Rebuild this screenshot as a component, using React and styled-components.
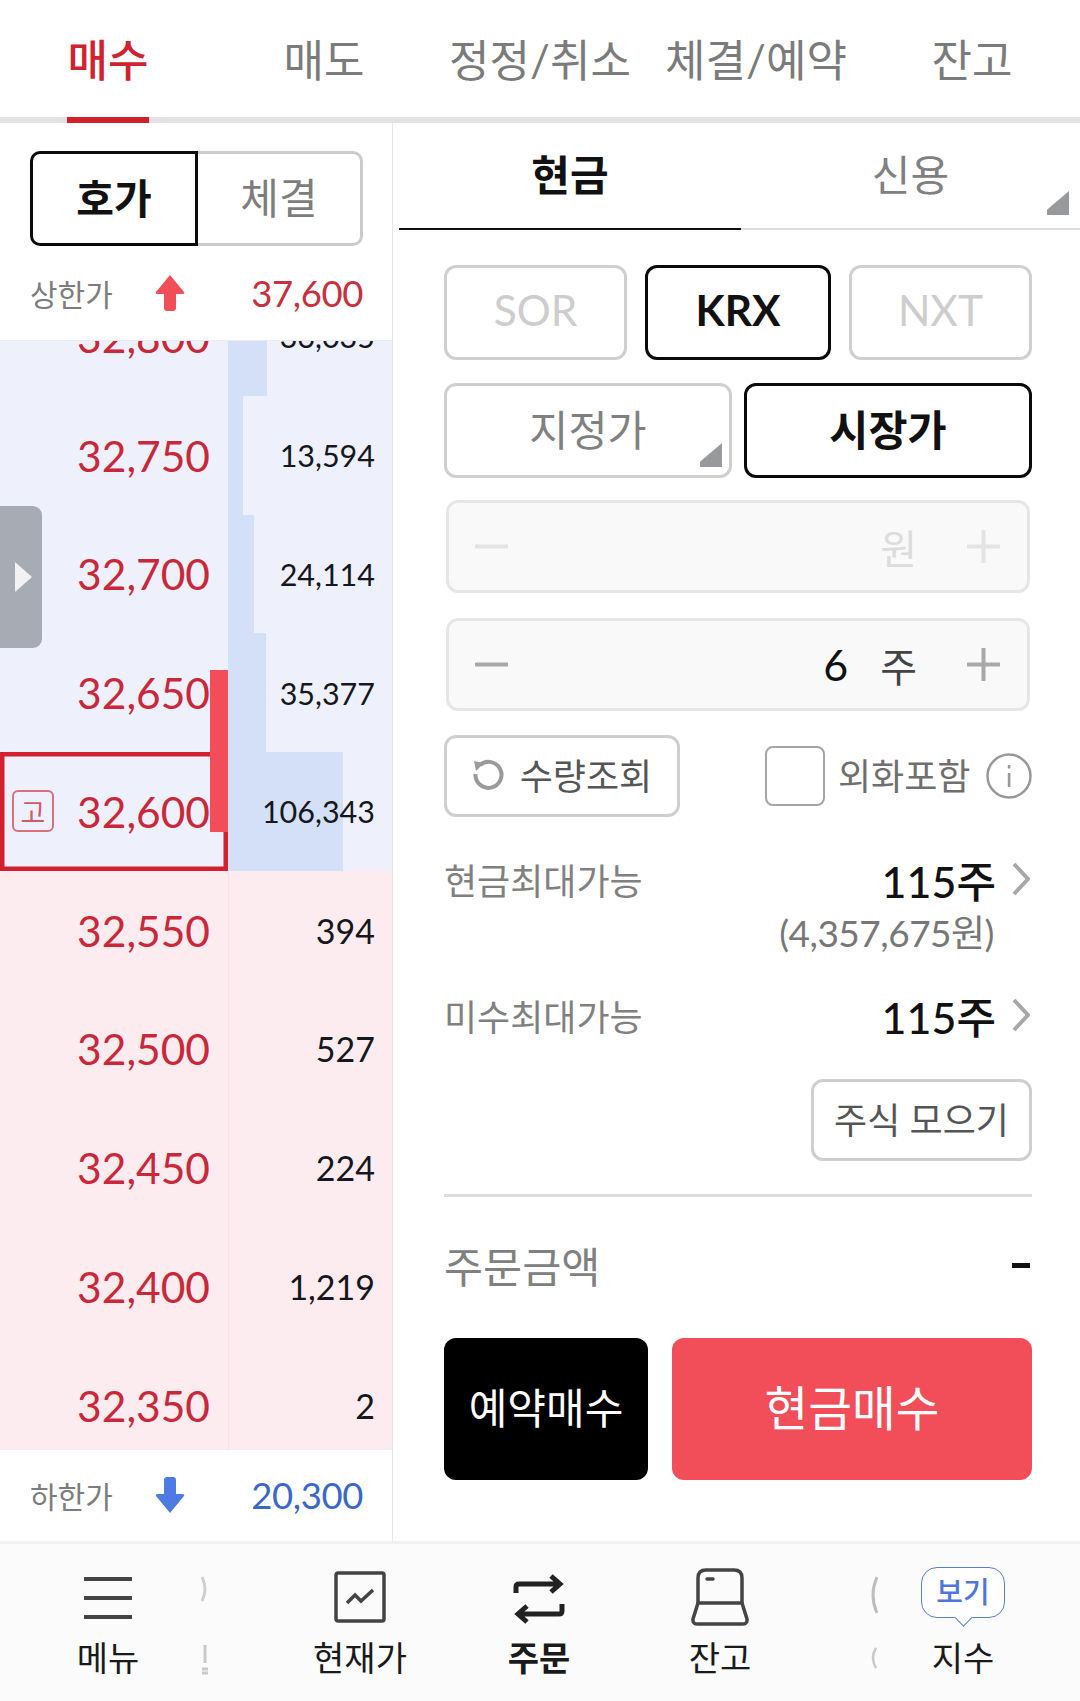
import React from "react";
import styled, { createGlobalStyle } from "styled-components";

const Global = createGlobalStyle`
  html, body { margin: 0; padding: 0; background: #fff; }
  * { box-sizing: border-box; }
  body { font-family: Lato, "Noto Sans CJK KR", sans-serif; }
`;

const Page = styled.div`
  width: 1080px; height: 1701px; display: flex; flex-direction: column; overflow: hidden; background: #fff;
`;
const TopTabs = styled.div`
  display: flex; height: 123px; flex: none; border-bottom: 6px solid #e2e2e4;
`;
const TopTab = styled.div`
  position: relative; width: 216px; height: 117px; display: flex; align-items: center; justify-content: center; padding-bottom: 2px;
  font-size: 44px; font-weight: ${p => (p.$on ? 500 : 400)}; color: ${p => (p.$on ? "#cf2331" : "#7b7b7b")};
  white-space: nowrap;
  &::after {
    content: ""; display: ${p => (p.$on ? "block" : "none")}; position: absolute; left: 67px; width: 82px; bottom: -6px; height: 6px; background: #d3202e;
  }
`;
const Main = styled.div`
  flex: 1; display: flex; min-height: 0; padding-top: 4px;
`;
const Left = styled.div`
  width: 393px; flex: none; display: flex; flex-direction: column; border-right: 1px solid #e6e6ea; margin-top: -4px;
`;
const LeftHead = styled.div`
  height: 217px; flex: none; padding: 28px 29px 0 30px;
`;
const Toggle = styled.div`
  display: flex; height: 95px; width: 333px;
`;
const ToggleOn = styled.div`
  width: 168px; border: 3.5px solid #0a0a0a; border-radius: 10px 0 0 10px; display: flex; align-items: center; justify-content: center; padding-bottom: 6px;
  font-size: 41px; font-weight: 700; color: #111;
`;
const ToggleOff = styled.div`
  width: 165px; border: 3px solid #cbcbcb; border-left: none; border-radius: 0 10px 10px 0; display: flex; align-items: center; justify-content: center; padding-bottom: 6px;
  font-size: 42px; color: #7d7d7d;
`;
const LimitRow = styled.div`
  display: grid; grid-template-columns: 125px 30px 1fr; align-items: center; height: ${p => p.$h}px;
`;
const LimitLabel = styled.span`
  font-size: 30px; color: #7c7c7c; white-space: nowrap;
`;
const LimitValue = styled.span`
  font-size: 36.5px; text-align: right; color: ${p => p.$c}; letter-spacing: -0.4px;
`;
const Book = styled.div`
  position: relative; height: 1110px; flex: none; overflow: hidden; border-top: 1px solid #ececf0;
`;
const BookInner = styled.div`
  margin-top: -64px;
`;
const BookRow = styled.div`
  display: flex; height: 118.75px; background: ${p => (p.$ask ? "#eef1fc" : "#fdecef")};
`;
const PriceCell = styled.div`
  width: 228px; flex: none; display: flex; align-items: center; justify-content: flex-end; padding-right: 18px; position: relative;
  font-size: 42.5px; color: #c9283a; box-shadow: ${p => (p.$cur ? "inset 0 0 0 4.5px #d3202e" : "none")};
`;
const VolumeCell = styled.div`
  flex: 1; display: flex; align-items: center; justify-content: flex-end; padding-right: 17px;
  font-size: ${p => p.$fs}px; color: #15171c;
  background: ${p => `linear-gradient(to right, #d3e0f8 ${p.$bar}px, transparent ${p.$bar}px)`};
  border-left: ${p => (p.$ask ? "none" : "1px solid #f9e3e6")};
`;
const StrengthBar = styled.div`
  position: absolute; left: 210px; top: 329px; width: 18px; height: 162px; background: #f24e5a;
`;
const SideHandle = styled.div`
  position: absolute; left: 0; top: 165px; width: 42px; height: 142px; background: #a7acb4; border-radius: 0 9px 9px 0;
  display: flex; align-items: center; padding-left: 15px;
  &::before {
    content: ""; border-left: 17px solid #f1f2f3; border-top: 15px solid transparent; border-bottom: 15px solid transparent;
  }
`;
const CurBadge = styled.span`
  position: absolute; left: 12px; top: 38px; width: 42px; height: 42px; border: 2.5px solid #d9707c; border-radius: 6px;
  display: flex; align-items: center; justify-content: center; font-size: 27px; color: #cf5c69;
`;
const LeftFoot = styled.div`
  flex: 1; padding: 0 29px 0 30px; background: #fff;
`;
const Right = styled.div`
  flex: 1; display: flex; flex-direction: column; min-width: 0;
`;
const SubTabs = styled.div`
  position: relative; display: flex; height: 103px; margin-left: 6px; flex: none;
`;
const SubTab = styled.div`
  width: ${p => p.$w}px; display: flex; align-items: center; justify-content: center; padding-bottom: 10px;
  font-size: 42px; font-weight: ${p => (p.$on ? 700 : 400)}; color: ${p => (p.$on ? "#111" : "#808080")};
  border-bottom: 2px solid ${p => (p.$on ? "#111" : "#dddddd")};
`;
const CornerMark = styled.span`
  position: absolute; right: ${p => p.$r}px; bottom: ${p => p.$b}px; width: 22px; height: 24px; background: #97999d;
  clip-path: polygon(100% 0, 100% 100%, 0 100%, 0 78%);
`;
const Form = styled.div`
  display: flex; flex-direction: column; padding: 35px 48px 0 51px;
`;
const BtnRow = styled.div`
  display: flex; justify-content: space-between; margin-top: ${p => p.$mt || 0}px;
`;
const Choice = styled.div`
  position: relative; width: ${p => p.$w}px; height: 95px; border-radius: 12px; display: flex; align-items: center; justify-content: center; padding-bottom: 7px;
  border: 3px solid ${p => (p.$on ? "#0a0a0a" : "#cfcfcf")};
  font-size: 42.5px; font-weight: ${p => (p.$on ? 700 : 400)};
  color: ${p => (p.$on ? "#111" : p.$dim ? "#cdcdcd" : "#808080")};
`;
const Stepper = styled.div`
  height: 93px; margin: ${p => p.$mt}px 2px 0; background: #f9f9f9; border: 3px solid #e6e6e6; border-radius: 12px;
  display: flex; align-items: center; padding: 0 27px 0 26px;
`;
const StepValue = styled.span`
  margin-left: auto; font-size: 43px; color: #111; margin-right: 32px;
`;
const StepUnit = styled.span`
  margin-left: ${p => (p.$auto ? "auto" : "0")}; font-size: 40px; margin-right: 50px; color: ${p => (p.$off ? "#dcdcdc" : "#444")};
`;
const OptionRow = styled.div`
  display: flex; align-items: center; margin-top: 24px; height: 82px;
`;
const SmallBtn = styled.div`
  width: ${p => p.$w}px; height: 82px; flex: none; border: 3px solid #cfcfcf; border-radius: 12px; display: flex; align-items: center; justify-content: center; gap: ${p => p.$gap || 0}px; padding-bottom: 4px;
  font-size: 36px; color: #555; white-space: nowrap;
`;
const CheckBox = styled.span`
  width: 60px; height: 60px; margin-left: 85px; border: 2px solid #a5a5a5; border-radius: 8px; flex: none;
`;
const CheckLabel = styled.span`
  margin-left: 13px; padding-bottom: 4px; font-size: 36px; color: #6f6f6f; white-space: nowrap; flex: none;
`;
const InfoWrap = styled.span`
  margin-left: 16px; display: flex; flex: none;
`;
const MaxRow = styled.div`
  display: flex; justify-content: space-between; align-items: center; height: 50px; margin-top: ${p => p.$mt}px;
`;
const MaxLabel = styled.span`
  font-size: 36px; color: #808080; white-space: nowrap;
`;
const MaxValue = styled.span`
  display: flex; align-items: center; gap: 16px; font-size: 43px; font-weight: 500; color: #111; white-space: nowrap; margin-right: 2px;
`;
const MaxSub = styled.div`
  text-align: right; margin: 4px 38px 0 0; font-size: 37px; line-height: 50px; color: #777; letter-spacing: -0.5px;
`;
const RightBtnRow = styled.div`
  display: flex; justify-content: flex-end; margin-top: 39px;
`;
const Divider = styled.div`
  height: 3px; background: #dcdcdc; margin-top: 33px;
`;
const TotalRow = styled.div`
  display: flex; justify-content: space-between; align-items: center; height: 60px; margin-top: 37px;
`;
const TotalLabel = styled.span`
  font-size: 42.5px; color: #808080;
`;
const TotalDash = styled.span`
  width: 18px; height: 5px; background: #111; margin: 3px 2px 0 0;
`;
const ActionRow = styled.div`
  display: flex; justify-content: space-between; margin-top: 44px;
`;
const ActionBtn = styled.div`
  width: ${p => p.$w}px; height: 142px; border-radius: 12px; background: ${p => p.$bg}; color: #fff; padding-bottom: 8px;
  display: flex; align-items: center; justify-content: center; font-size: ${p => p.$fs}px; white-space: nowrap;
`;
const Nav = styled.div`
  position: relative; flex: none; height: 160px; background: #fbfbfc; border-top: 3px solid #eff0f3;
  display: grid; grid-template-columns: 216px 54px 180px 178px 184px 34px 234px;
`;
const NavItem = styled.div`
  grid-column: ${p => p.$col}; display: flex; flex-direction: column; align-items: center;
`;
const NavIcon = styled.div`
  height: 90px; display: flex; align-items: flex-end; justify-content: center; padding-bottom: ${p => p.$pb ?? 14}px;
`;
const NavLabel = styled.span`
  font-size: 34px; line-height: 48px; color: #1a1a1a; font-weight: ${p => (p.$b ? 700 : 400)}; white-space: nowrap;
`;
const Bubble = styled.div`
  position: relative; width: 84px; height: 51px; border: 1.5px solid #5c7ec9; border-radius: 16px; background: #fff; padding-bottom: 5px;
  display: flex; align-items: center; justify-content: center; font-size: 29px; font-weight: 500; color: #4f76d8;
  &::after {
    content: ""; position: absolute; left: 35px; bottom: -7px; width: 12px; height: 12px; background: #fff;
    border-right: 1.5px solid #5c7ec9; border-bottom: 1.5px solid #5c7ec9; transform: rotate(45deg);
  }
`;
const Ghost = styled.svg`
  position: absolute; left: ${p => p.$x}px; top: ${p => p.$y}px;
`;

const asks = [
  ["32,800", "36,035", 39], ["32,750", "13,594", 15], ["32,700", "24,114", 26],
  ["32,650", "35,377", 38], ["32,600", "106,343", 115],
];
const bids = [["32,550", "394"], ["32,500", "527"], ["32,450", "224"], ["32,400", "1,219"], ["32,350", "2"]];
const volumeSize = v => (v.length > 5 ? 30.5 : 34);

const ArrowUp = () => (
  <svg width="30" height="38" viewBox="0 0 30 38"><path d="M15 1 L29 18 Q30 20 27 20 L21 20 L21 34 Q21 37 18 37 L12 37 Q9 37 9 34 L9 20 L3 20 Q0 20 1 18 Z" fill="#f24e5a" /></svg>
);
const ArrowDown = () => (
  <svg width="30" height="38" viewBox="0 0 30 38"><path d="M15 37 L29 20 Q30 18 27 18 L21 18 L21 4 Q21 1 18 1 L12 1 Q9 1 9 4 L9 18 L3 18 Q0 18 1 20 Z" fill="#4d7ae3" /></svg>
);
const Minus = ({ c }) => (
  <svg width="33" height="33" viewBox="0 0 33 33"><path d="M1 16.5H32" stroke={c} strokeWidth="4" strokeLinecap="round" /></svg>
);
const Plus = ({ c }) => (
  <svg width="33" height="33" viewBox="0 0 33 33"><path d="M1 16.5H32M16.5 1V32" stroke={c} strokeWidth="4" strokeLinecap="round" /></svg>
);
const Chevron = () => (
  <svg width="18" height="34" viewBox="0 0 18 34"><path d="M2 2 L16 17 L2 32" fill="none" stroke="#a8a8a8" strokeWidth="4" /></svg>
);
const Refresh = () => (
  <svg width="32" height="32" viewBox="0 0 32 32">
    <path d="M8 7 A13 13 0 1 1 3.5 16" fill="none" stroke="#9a9a9a" strokeWidth="4" />
    <path d="M2 3 L12 5 L4 13 Z" fill="#9a9a9a" />
  </svg>
);
const Info = () => (
  <svg width="46" height="46" viewBox="0 0 46 46">
    <circle cx="23" cy="23" r="21.5" fill="none" stroke="#989898" strokeWidth="2.5" />
    <rect x="21.8" y="20" width="2.6" height="14" fill="#989898" />
    <rect x="21.8" y="12" width="2.6" height="3.5" fill="#989898" />
  </svg>
);
const IconMenu = () => (
  <svg width="48" height="44" viewBox="0 0 48 44"><path d="M0 3H48M0 22H48M0 41H48" stroke="#444" strokeWidth="4" /></svg>
);
const IconChart = () => (
  <svg width="52" height="52" viewBox="0 0 52 52">
    <rect x="2" y="2" width="48" height="48" rx="2" fill="none" stroke="#444" strokeWidth="3.5" />
    <path d="M13 32 L21 24 L27 30 L39 19" fill="none" stroke="#444" strokeWidth="3.5" />
  </svg>
);
const IconSwap = () => (
  <svg width="52" height="50" viewBox="0 0 52 50" fill="none" stroke="#222" strokeWidth="5">
    <path d="M3 19 V13 Q3 10 6 10 H47 M38 2 L47 10 L38 18" />
    <path d="M49 30 V37 Q49 40 46 40 H5 M14 32 L5 40 L14 48" />
  </svg>
);
const IconBook = () => (
  <svg width="58" height="58" viewBox="0 0 58 58" fill="none" stroke="#444" strokeWidth="3.5" strokeLinejoin="round">
    <path d="M7 35 V10 Q7 2 15 2 H43 Q51 2 51 10 V35" />
    <path d="M7 35 H51 L56 51 Q56.5 56 52 56 H6 Q1.5 56 2 51 Z" />
    <path d="M16 11 H22" strokeWidth="3.5" strokeLinecap="round" />
  </svg>
);

export default function App() {
  return (
    <Page>
      <Global />
      <TopTabs>
        <TopTab $on>매수</TopTab>
        <TopTab>매도</TopTab>
        <TopTab>정정/취소</TopTab>
        <TopTab>체결/예약</TopTab>
        <TopTab>잔고</TopTab>
      </TopTabs>
      <Main>
        <Left>
          <LeftHead>
            <Toggle>
              <ToggleOn>호가</ToggleOn>
              <ToggleOff>체결</ToggleOff>
            </Toggle>
            <LimitRow $h={93}>
              <LimitLabel>상한가</LimitLabel>
              <ArrowUp />
              <LimitValue $c="#c9303e">37,600</LimitValue>
            </LimitRow>
          </LeftHead>
          <Book>
            <BookInner>
              {asks.map(([p, v, w]) => (
                <BookRow $ask key={p}>
                  <PriceCell $cur={p === "32,600"}>
                    {p === "32,600" && <CurBadge>고</CurBadge>}
                    {p}
                  </PriceCell>
                  <VolumeCell $ask $bar={w} $fs={volumeSize(v)}>{v}</VolumeCell>
                </BookRow>
              ))}
              {bids.map(([p, v]) => (
                <BookRow key={p}>
                  <PriceCell>{p}</PriceCell>
                  <VolumeCell $bar={0} $fs={volumeSize(v)}>{v}</VolumeCell>
                </BookRow>
              ))}
            </BookInner>
            <StrengthBar />
            <SideHandle />
          </Book>
          <LeftFoot>
            <LimitRow $h={90}>
              <LimitLabel>하한가</LimitLabel>
              <ArrowDown />
              <LimitValue $c="#3a69c8">20,300</LimitValue>
            </LimitRow>
          </LeftFoot>
        </Left>
        <Right>
          <SubTabs>
            <SubTab $on $w={342}>현금</SubTab>
            <SubTab $w={339}>신용</SubTab>
            <CornerMark $r={11} $b={15} />
          </SubTabs>
          <Form>
            <BtnRow>
              <Choice $w={183} $dim>SOR</Choice>
              <Choice $w={186} $on>KRX</Choice>
              <Choice $w={183} $dim>NXT</Choice>
            </BtnRow>
            <BtnRow $mt={23}>
              <Choice $w={288}>
                지정가
                <CornerMark $r={7} $b={8} />
              </Choice>
              <Choice $w={288} $on>시장가</Choice>
            </BtnRow>
            <Stepper $mt={22}>
              <Minus c="#e3e3e3" />
              <StepUnit $auto $off>원</StepUnit>
              <Plus c="#e3e3e3" />
            </Stepper>
            <Stepper $mt={25}>
              <Minus c="#a8a8a8" />
              <StepValue>6</StepValue>
              <StepUnit>주</StepUnit>
              <Plus c="#a8a8a8" />
            </Stepper>
            <OptionRow>
              <SmallBtn $w={236} $gap={16}><Refresh />수량조회</SmallBtn>
              <CheckBox />
              <CheckLabel>외화포함</CheckLabel>
              <InfoWrap><Info /></InfoWrap>
            </OptionRow>
            <MaxRow $mt={37}>
              <MaxLabel>현금최대가능</MaxLabel>
              <MaxValue>115주<Chevron /></MaxValue>
            </MaxRow>
            <MaxSub>(4,357,675원)</MaxSub>
            <MaxRow $mt={32}>
              <MaxLabel>미수최대가능</MaxLabel>
              <MaxValue>115주<Chevron /></MaxValue>
            </MaxRow>
            <RightBtnRow>
              <SmallBtn $w={221}>주식 모으기</SmallBtn>
            </RightBtnRow>
            <Divider />
            <TotalRow>
              <TotalLabel>주문금액</TotalLabel>
              <TotalDash />
            </TotalRow>
            <ActionRow>
              <ActionBtn $w={204} $bg="#000" $fs={42}>예약매수</ActionBtn>
              <ActionBtn $w={360} $bg="#f24e5a" $fs={47.5}>현금매수</ActionBtn>
            </ActionRow>
          </Form>
        </Right>
      </Main>
      <Nav>
        <NavItem $col={1}>
          <NavIcon><IconMenu /></NavIcon>
          <NavLabel>메뉴</NavLabel>
        </NavItem>
        <NavItem $col={3}>
          <NavIcon $pb={11}><IconChart /></NavIcon>
          <NavLabel>현재가</NavLabel>
        </NavItem>
        <NavItem $col={4}>
          <NavIcon $pb={10}><IconSwap /></NavIcon>
          <NavLabel $b>주문</NavLabel>
        </NavItem>
        <NavItem $col={5}>
          <NavIcon $pb={8}><IconBook /></NavIcon>
          <NavLabel>잔고</NavLabel>
        </NavItem>
        <NavItem $col={7}>
          <NavIcon $pb={16}><Bubble>보기</Bubble></NavIcon>
          <NavLabel>지수</NavLabel>
        </NavItem>
        <Ghost $x={201} $y={31} width="8" height="28" viewBox="0 0 8 28"><path d="M1 2 Q7 14 1 26" fill="none" stroke="#cfcfcf" strokeWidth="3" /></Ghost>
        <Ghost $x={202} $y={101} width="6" height="30" viewBox="0 0 6 30"><path d="M3 0 V18 M0 24 H6 M0 28 H6" fill="none" stroke="#c9c9c9" strokeWidth="3" /></Ghost>
        <Ghost $x={870} $y={31} width="8" height="40" viewBox="0 0 8 40"><path d="M7 2 Q-1 20 7 38" fill="none" stroke="#bdbdbd" strokeWidth="3" /></Ghost>
        <Ghost $x={870} $y={103} width="7" height="22" viewBox="0 0 7 22"><path d="M6 1 Q0 11 6 21" fill="none" stroke="#c9c9c9" strokeWidth="2.5" /></Ghost>
      </Nav>
    </Page>
  );
}
